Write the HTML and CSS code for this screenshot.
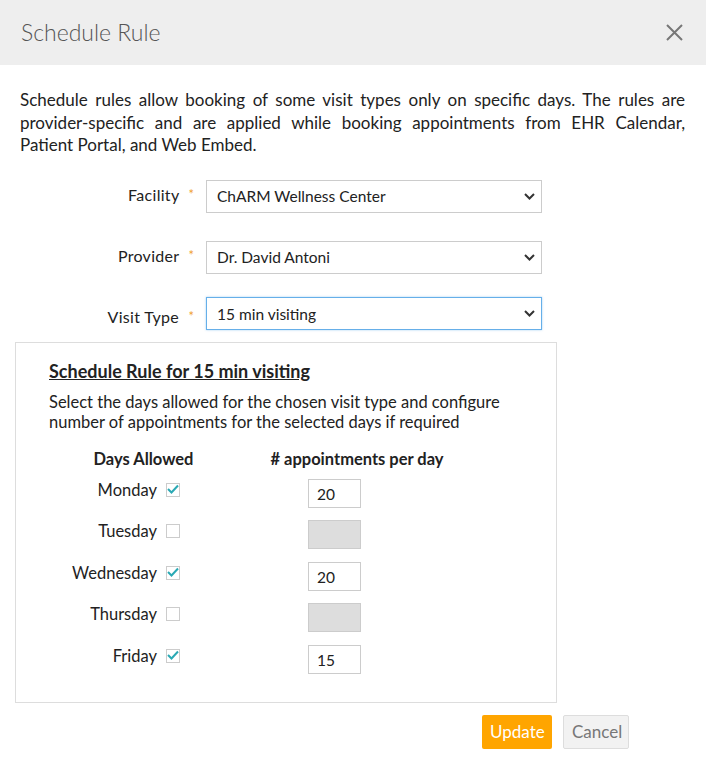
FILE: index.html
```html
<!DOCTYPE html>
<html>
<head>
<meta charset="utf-8">
<link rel="stylesheet" href="styles.css">
</head>
<body>
<div class="header">
  <div class="title">Schedule Rule</div>
  <svg class="close" width="17" height="17" viewBox="0 0 17 17"><path d="M1 1 L16 16 M16 1 L1 16" stroke="#777" stroke-width="2" fill="none"/></svg>
</div>
<div class="content">
  <p class="intro">Schedule rules allow booking of some visit types only on specific days. The rules are provider-specific and are applied while booking appointments from EHR Calendar, Patient Portal, and Web Embed.</p>

  <div class="form-row row-facility">
    <div class="label">Facility <span class="req">*</span></div>
    <div class="select-wrap">
      <div class="select">ChARM Wellness Center</div>
      <svg class="chev" width="11" height="7" viewBox="0 0 11 7"><path d="M1 1 L5.5 5.5 L10 1" stroke="#333" stroke-width="2" fill="none"/></svg>
    </div>
  </div>
  <div class="form-row row-provider">
    <div class="label">Provider <span class="req">*</span></div>
    <div class="select-wrap">
      <div class="select">Dr. David Antoni</div>
      <svg class="chev" width="11" height="7" viewBox="0 0 11 7"><path d="M1 1 L5.5 5.5 L10 1" stroke="#333" stroke-width="2" fill="none"/></svg>
    </div>
  </div>
  <div class="form-row row-visit">
    <div class="label">Visit Type <span class="req">*</span></div>
    <div class="select-wrap">
      <div class="select focused">15 min visiting</div>
      <svg class="chev" width="11" height="7" viewBox="0 0 11 7"><path d="M1 1 L5.5 5.5 L10 1" stroke="#333" stroke-width="2" fill="none"/></svg>
    </div>
  </div>

  <div class="panel">
    <div class="panel-title">Schedule Rule for 15 min visiting</div>
    <p class="panel-desc">Select the days allowed for the chosen visit type and configure<br>number of appointments for the selected days if required</p>
    <div class="col-heads">
      <div class="head-days">Days Allowed</div>
      <div class="head-appts"># appointments per day</div>
    </div>
    <div class="days">
      <div class="day-row">
        <div class="day-name">Monday</div>
        <span class="cb checked"><svg width="12" height="10" viewBox="0 0 12 10"><path d="M1 5 L4.5 8.5 L11 1.5" stroke="#2aa9b4" stroke-width="2" fill="none"/></svg></span>
        <div class="num">20</div>
      </div>
      <div class="day-row">
        <div class="day-name">Tuesday</div>
        <span class="cb"></span>
        <div class="num disabled"></div>
      </div>
      <div class="day-row">
        <div class="day-name">Wednesday</div>
        <span class="cb checked"><svg width="12" height="10" viewBox="0 0 12 10"><path d="M1 5 L4.5 8.5 L11 1.5" stroke="#2aa9b4" stroke-width="2" fill="none"/></svg></span>
        <div class="num">20</div>
      </div>
      <div class="day-row">
        <div class="day-name">Thursday</div>
        <span class="cb"></span>
        <div class="num disabled"></div>
      </div>
      <div class="day-row">
        <div class="day-name">Friday</div>
        <span class="cb checked"><svg width="12" height="10" viewBox="0 0 12 10"><path d="M1 5 L4.5 8.5 L11 1.5" stroke="#2aa9b4" stroke-width="2" fill="none"/></svg></span>
        <div class="num">15</div>
      </div>
    </div>
  </div>

  <div class="actions">
    <div class="btn btn-update">Update</div>
    <div class="btn btn-cancel">Cancel</div>
  </div>
</div>
</body>
</html>
```
FILE: styles.css
```css
* { box-sizing: border-box; }
body {
  margin: 0;
  font-family: Lato, "Open Sans", sans-serif;
  color: #222;
  background: #fff;
}
.header {
  height: 65px;
  background: #eeeeee;
  display: flex;
  align-items: center;
  justify-content: space-between;
  padding: 0 23px 0 21px;
}
.title {
  font-size: 23px;
  font-weight: 300;
  color: #555;
  margin-top: -1px;
}
.close { display: block; margin-top: -1px; }
.content {
  padding: 24px 21px 0 20px;
}
.intro {
  margin: 0;
  font-size: 17px;
  line-height: 22.5px;
  text-align: justify;
  color: #222;
}
.form-row {
  display: flex;
  align-items: center;
}
.row-facility { margin-top: 23px; }
.row-provider { margin-top: 28px; }
.row-visit { margin-top: 23px; }
.label {
  width: 174px;
  text-align: right;
  font-size: 16px;
  letter-spacing: 0.3px;
  color: #222;
  margin-right: 12px;
  margin-top: -4px;
}
.row-visit .label { margin-top: 6px; }
.req {
  color: #f0a030;
  font-size: 13px;
  margin-left: 5px;
  vertical-align: 2px;
  letter-spacing: 0;
}
.select-wrap {
  position: relative;
  width: 336px;
}
.select {
  height: 33px;
  border: 1px solid #ccc;
  background: #fff;
  font-size: 15.5px;
  line-height: 31px;
  padding: 0 10px;
  color: #222;
}
.select.focused {
  border-color: #66afe9;
  box-shadow: 0 0 2px rgba(102,175,233,0.6);
  line-height: 33px;
}
.chev {
  position: absolute;
  right: 7px;
  top: 13px;
}
.panel {
  margin: 12px 0 0 -5px;
  width: 542px;
  border: 1px solid #ddd;
  padding: 18px 20px 28px 33px;
}
.panel-title {
  font-size: 18px;
  font-weight: 700;
  text-decoration: underline;
  line-height: 20px;
}
.panel-desc {
  margin: 11px 0 0;
  font-size: 16.5px;
  line-height: 20px;
}
.col-heads {
  display: flex;
  margin-top: 17px;
  font-weight: 700;
  font-size: 16.5px;
  line-height: 20px;
}
.head-days { width: 189px; text-align: center; }
.head-appts { width: 238px; text-align: center; }
.days {
  margin-top: 10px;
  display: flex;
  flex-direction: column;
  gap: 12.5px;
}
.day-row {
  display: flex;
  align-items: flex-start;
}
.day-name {
  width: 108px;
  text-align: right;
  font-size: 16.5px;
  line-height: 20px;
  margin-top: 1px;
}
.cb {
  width: 14px;
  height: 14px;
  border: 1px solid #ccc;
  margin: 4px 0 0 9px;
  display: flex;
  align-items: center;
  justify-content: center;
  background: #fff;
}
.cb svg { display: block; margin-top: -1px; }
.num {
  margin-left: 128px;
  width: 53px;
  height: 29px;
  border: 1px solid #ccc;
  font-size: 15.5px;
  line-height: 29px;
  padding: 0 8px;
  color: #222;
}
.num.disabled {
  background: #dddddd;
}
.actions {
  display: flex;
  justify-content: flex-end;
  gap: 11px;
  margin-top: 12px;
  padding-right: 56px;
}
.btn {
  height: 34px;
  font-size: 17px;
  line-height: 34px;
  padding: 0 8px;
  border-radius: 2px;
}
.btn-update {
  background: #ffa500;
  color: #fff;
  width: 70px;
  text-align: center;
}
.btn-cancel {
  background: #f2f2f2;
  color: #777;
  border: 1px solid #ddd;
  line-height: 32px;
  width: 66px;
  text-align: center;
}
```
